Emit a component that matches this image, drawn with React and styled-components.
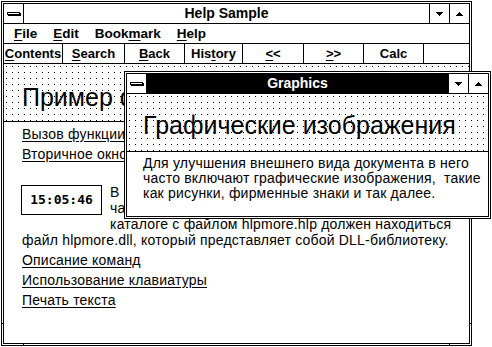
import React from 'react';
import styled, { createGlobalStyle } from 'styled-components';

const GlobalStyle = createGlobalStyle`
  html, body {
    margin: 0;
    padding: 0;
    background: #fff;
  }
  body {
    font-family: "Liberation Sans", Arial, sans-serif;
    color: #000;
  }
`;

const Desktop = styled.div`
  position: relative;
  width: 492px;
  height: 347px;
  overflow: hidden;
  background: #fff;
`;

// windows sit on a free desktop, so they are placed by coordinates
const Window = styled.div`
  position: absolute;
  left: ${(p) => p.$left}px;
  top: ${(p) => p.$top}px;
  width: ${(p) => p.$width}px;
  height: ${(p) => p.$height}px;
  box-sizing: border-box;
  border: 1px solid #000;
  padding: 1px;
  background: #fff;
  z-index: ${(p) => p.$z || 1};
`;

const Frame = styled.div`
  box-sizing: border-box;
  height: 100%;
  border: 1px solid #000;
  display: flex;
  flex-direction: column;
  overflow: hidden;
`;

const Tick = styled.span`
  position: absolute;
  background: #000;
  width: ${(p) => (p.$vertical ? 1 : 3)}px;
  height: ${(p) => (p.$vertical ? 3 : 1)}px;
  left: ${(p) => p.$x};
  top: ${(p) => p.$y};
`;

const TitleBar = styled.div`
  flex: none;
  display: flex;
  height: 20px;
  box-sizing: border-box;
  border-bottom: 1px solid #000;
  background: ${(p) => (p.$active ? '#000' : '#fff')};
`;

const SysBox = styled.div`
  width: 20px;
  box-sizing: border-box;
  border-right: 1px solid #000;
  background: #fff;
  display: flex;
  align-items: center;
  justify-content: center;
`;

const SysDash = styled.div`
  width: 13px;
  height: 3px;
  box-sizing: border-box;
  border: 1px solid #000;
  background: #fff;
  box-shadow: 1px 1px 0 #000;
`;

const Caption = styled.div`
  flex: 1;
  text-align: center;
  font-weight: bold;
  font-size: 14px;
  line-height: 19px;
  color: ${(p) => (p.$active ? '#fff' : '#000')};
`;

const SizeBtn = styled.div`
  width: 20px;
  box-sizing: border-box;
  border-left: 1px solid #000;
  background: #fff;
  display: flex;
  align-items: center;
  justify-content: center;
`;

const MenuBar = styled.div`
  flex: none;
  display: flex;
  gap: 16px;
  height: 20px;
  box-sizing: border-box;
  padding-left: 10px;
  border-bottom: 1px solid #000;
  font-weight: bold;
  font-size: 13.5px;
  line-height: 19px;
`;

const Acc = styled.span`
  text-decoration: underline;
  text-underline-offset: 2px;
`;

const ButtonBar = styled.div`
  flex: none;
  display: flex;
  height: 20px;
  box-sizing: border-box;
  border-bottom: 1px solid #000;
`;

const HelpButton = styled.div`
  width: ${(p) => p.$w}px;
  box-sizing: border-box;
  border-right: 1px solid #000;
  text-align: center;
  font-weight: bold;
  font-size: 13px;
  line-height: 19px;
`;

const NonScroll = styled.div`
  flex: none;
  height: 58px;
  box-sizing: border-box;
  border-bottom: 1px solid #000;
  padding: ${(p) => p.$top}px 0 0 ${(p) => p.$pad}px;
  background-color: #fff;
  background-image: conic-gradient(from 270deg at 1px 1px, #000 90deg, transparent 0);
  background-size: 6px 6px;
  background-position: 2px 2px;
  overflow: hidden;
`;

const Heading = styled.div`
  font-size: 25px;
  line-height: 28px;
  white-space: nowrap;
`;

const Scroll = styled.div`
  flex: 1;
  display: flex;
  flex-direction: column;
  gap: 4px;
  padding: ${(p) => p.$top}px 6px 0 ${(p) => p.$pad}px;
  font-size: 14px;
  line-height: ${(p) => p.$lh}px;
  letter-spacing: 0.2px;
  white-space: nowrap;
  overflow: hidden;
`;

const Topic = styled.div``;

const Jump = styled.span`
  text-decoration: underline;
  text-underline-offset: 2px;
`;

const Para = styled.div`
  margin-top: 18px;
`;

const Clock = styled.div`
  float: left;
  width: 81px;
  height: 30px;
  box-sizing: border-box;
  margin: 1px 8px 8px -1px;
  border: 1px solid #000;
  font-family: "DejaVu Sans Mono", "Liberation Mono", monospace;
  font-weight: bold;
  font-size: 13px;
  line-height: 28px;
  letter-spacing: 0;
  text-align: center;
`;

const Arrow = ({ up }) => (
  <svg width="7" height="4" viewBox="0 0 7 4" shapeRendering="crispEdges">
    <polygon points={up ? '3.5,0 7,4 0,4' : '0,0 7,0 3.5,4'} fill="#000" />
  </svg>
);

const Ticks = ({ w, h }) => (
  <>
    <Tick $vertical $x="21px" $y={`${h - 4}px`} />
    <Tick $vertical $x={`${w - 24}px`} $y={`${h - 4}px`} />
    <Tick $x="-1px" $y={`${h - 24}px`} />
    <Tick $x={`${w - 4}px`} $y={`${h - 24}px`} />
  </>
);

const menu = [
  ['F', 'ile'],
  ['E', 'dit'],
  ['Book', 'm', 'ark'],
  ['H', 'elp'],
];

const buttons = [
  { w: 59, label: [<Acc key="a">C</Acc>, 'ontents'] },
  { w: 62, label: [<Acc key="a">S</Acc>, 'earch'] },
  { w: 60, label: [<Acc key="a">B</Acc>, 'ack'] },
  { w: 58, label: ['His', <Acc key="a">t</Acc>, 'ory'] },
  { w: 61, label: [<Acc key="a">&lt;</Acc>, '<'] },
  { w: 60, label: [<Acc key="a">&gt;</Acc>, '>'] },
  { w: 60, label: ['Calc'] },
];

export default function App() {
  return (
    <Desktop>
      <GlobalStyle />

      <Window $left={1} $top={1} $width={471} $height={345}>
        <Frame>
          <TitleBar>
            <SysBox>
              <SysDash />
            </SysBox>
            <Caption>Help Sample</Caption>
            <SizeBtn>
              <Arrow />
            </SizeBtn>
            <SizeBtn>
              <Arrow up />
            </SizeBtn>
          </TitleBar>
          <MenuBar>
            {menu.map((m) => (
              <span key={m.join('')}>
                {m.length === 2 ? (
                  <>
                    <Acc>{m[0]}</Acc>
                    {m[1]}
                  </>
                ) : (
                  <>
                    {m[0]}
                    <Acc>{m[1]}</Acc>
                    {m[2]}
                  </>
                )}
              </span>
            ))}
          </MenuBar>
          <ButtonBar>
            {buttons.map((b, i) => (
              <HelpButton key={i} $w={b.w}>
                {b.label}
              </HelpButton>
            ))}
          </ButtonBar>
          <NonScroll $pad={18} $top={19}>
            <Heading>Пример файла справки</Heading>
          </NonScroll>
          <Scroll $pad={18} $top={4} $lh={16}>
            <Topic>
              <Jump>Вызов функции из DLL-библиотеки</Jump>
            </Topic>
            <Topic>
              <Jump>Вторичное окно справочной системы</Jump>
            </Topic>
            <Para>
              <Clock>15:05:46</Clock>
              В этом разделе показаны часы, которые
              <br />
              часто обновляются из DLL. В том же
              <br />
              каталоге с файлом hlpmore.hlp должен находиться
              <br />
              файл hlpmore.dll, который представляет собой DLL-библиотеку.
            </Para>
            <Topic>
              <Jump>Описание команд</Jump>
            </Topic>
            <Topic>
              <Jump>Использование клавиатуры</Jump>
            </Topic>
            <Topic>
              <Jump>Печать текста</Jump>
            </Topic>
          </Scroll>
        </Frame>
        <Ticks w={471} h={345} />
      </Window>

      <Window $left={124} $top={71} $width={367} $height={148} $z={2}>
        <Frame>
          <TitleBar $active>
            <SysBox>
              <SysDash />
            </SysBox>
            <Caption $active>Graphics</Caption>
            <SizeBtn>
              <Arrow />
            </SizeBtn>
            <SizeBtn>
              <Arrow up />
            </SizeBtn>
          </TitleBar>
          <NonScroll $pad={16} $top={17}>
            <Heading>Графические изображения</Heading>
          </NonScroll>
          <Scroll $pad={16} $top={4} $lh={15}>
            <div>
              Для улучшения внешнего вида документа в него
              <br />
              часто включают графические изображения,&nbsp; такие
              <br />
              как рисунки, фирменные знаки и так далее.
            </div>
          </Scroll>
        </Frame>
      </Window>
    </Desktop>
  );
}
